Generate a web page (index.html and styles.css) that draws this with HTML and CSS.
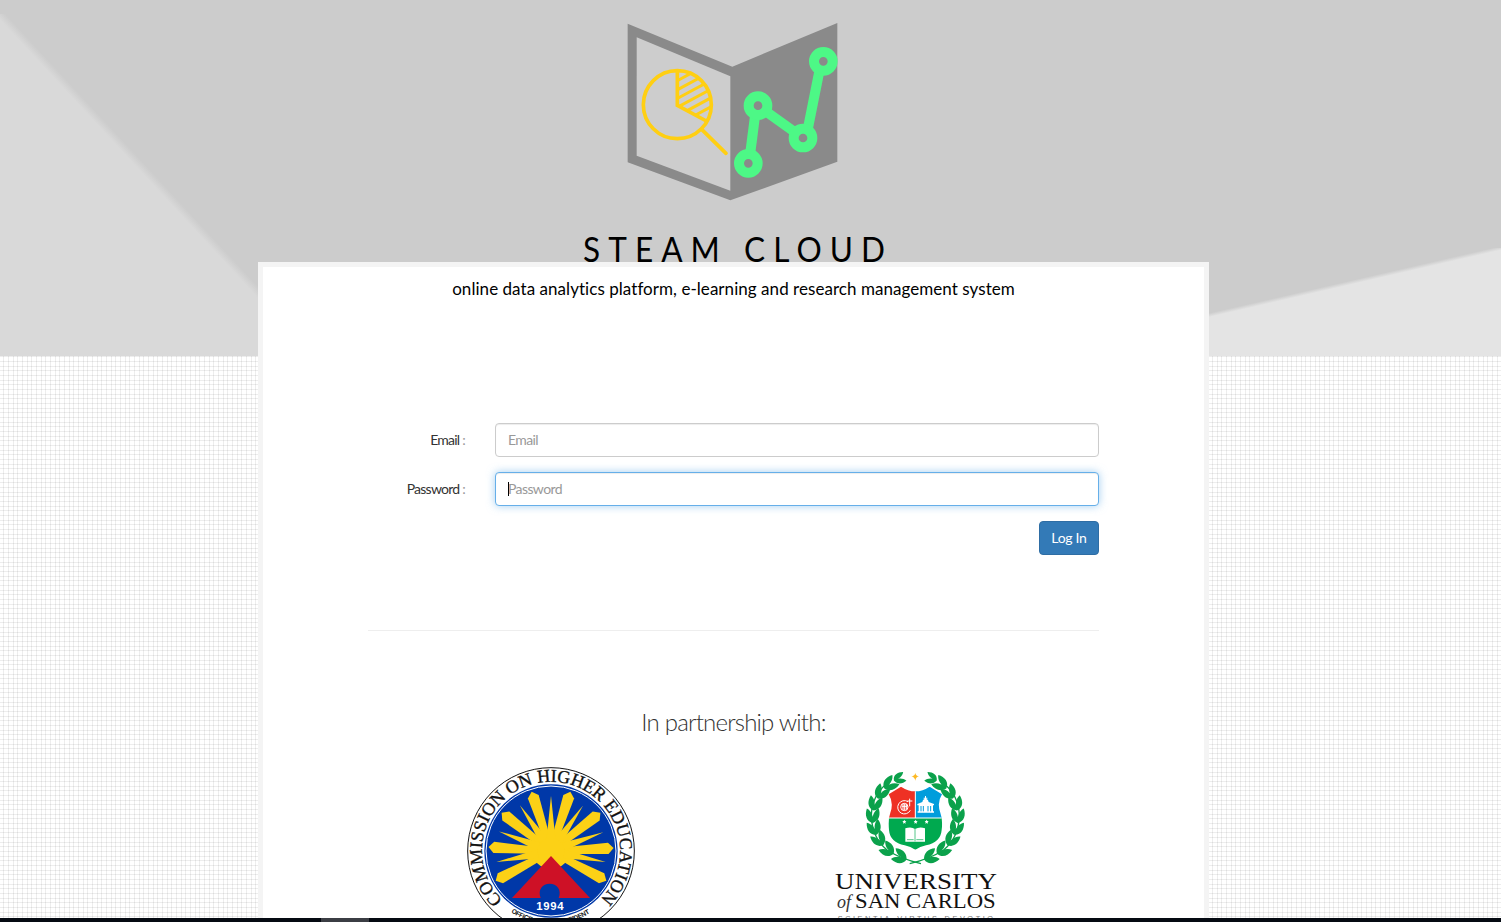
FILE: index.html
```html
<!DOCTYPE html>
<html lang="en">
<head>
<meta charset="utf-8">
<title>STEAM Cloud</title>
<link rel="stylesheet" href="styles.css">
</head>
<body>
<header class="hero">
  <svg class="logo" viewBox="0 0 720 600" aria-label="STEAM Cloud logo">
    <path d="M53 41 367 170 682 39V455L361 571 53 457Z" fill="#8a8a8a"/>
    <path d="M80 82 361 199V542L80 437Z" fill="#cdcdcd"/>
    <clipPath id="slice"><path d="M202 284V183A101 101 0 0 1 291 333Z"/></clipPath>
    <g fill="none" stroke="#ffcf12" stroke-width="11">
      <circle cx="202" cy="284" r="102"/>
      <path d="M202 183V286L289 333"/>
      <path d="M275 358 348 430" stroke-linecap="round"/>
      <path clip-path="url(#slice)" stroke-width="9" d="M195 216 265 178M195 243 290 192M195 269 305 210M200 293 315 231M222 307 320 254M246 321 320 281"/>
    </g>
    <g fill="none" stroke="#4df886" stroke-width="30">
      <path d="M417 459 439 287"/><path d="M444 287 579 384"/><path d="M588 384 634 154"/>
    </g>
    <g fill="#8a8a8a" stroke="#4df886" stroke-width="30">
      <circle cx="415" cy="460" r="28"/><circle cx="444" cy="287" r="28"/>
      <circle cx="579" cy="384" r="28"/><circle cx="640" cy="154" r="28"/>
    </g>
  </svg>
  <h1 class="title">STEAM CLOUD</h1>
</header>
<main class="card">
  <p class="tagline">online data analytics platform, e-learning and research management system</p>
  <form class="login">
    <label class="label" for="email">Email <span class="colon">:</span></label>
    <input class="field" id="email" type="text" placeholder="Email">
    <label class="label" for="password">Password <span class="colon">:</span></label>
    <div class="active"><input class="field focused" id="password" type="password" placeholder="Password"><i class="caret"></i></div>
    <button class="submit" type="button">Log In</button>
  </form>
  <hr class="rule">
  <h2 class="partners-title">In partnership with:</h2>
  <div class="partners">
    <svg class="seal" viewBox="36 37 504 504" aria-label="Commission on Higher Education">
      <defs>
        <path id="arc" d="M143 436A207 207 0 1 1 433 436"/>
        <path id="foot" d="M168 473A219 219 0 0 0 408 473"/>
        <path id="ray" d="M0-188 17-172 10-40H-10L-17-172Z"/>
        <path id="beam" d="M0-167 13-40H-13Z"/>
      </defs>
      <circle cx="288" cy="289" r="250" fill="#fff" stroke="#111" stroke-width="3"/>
      <circle cx="288" cy="289" r="200" fill="#0038a8"/>
      <circle cx="288" cy="289" r="195" fill="none" stroke="#fff" stroke-width="3"/>
      <g fill="#fcd116" transform="translate(288 290)">
        <circle cy="-4" r="57"/>
        <use href="#ray" transform="rotate(-18)"/><use href="#ray" transform="rotate(18)"/>
        <use href="#ray" transform="rotate(-52)"/><use href="#ray" transform="rotate(52)"/>
        <use href="#ray" transform="rotate(-86)"/><use href="#ray" transform="rotate(87)"/>
        <use href="#ray" transform="rotate(-118)"/><use href="#ray" transform="rotate(118)"/>
        <use href="#beam"/>
        <use href="#beam" transform="rotate(-34)"/><use href="#beam" transform="rotate(35)"/>
        <use href="#beam" transform="rotate(-69)"/><use href="#beam" transform="rotate(70)"/>
        <use href="#beam" transform="rotate(-101)"/><use href="#beam" transform="rotate(101)"/>
      </g>
      <path d="M288 304 405 430H171Z" fill="#ce1126"/>
      <path d="M257 430C247 404 263 387 284 387S321 404 311 430Z" fill="#0038a8"/>
      <text class="seal-year" x="244" y="465" textLength="82">1994</text>
      <text class="seal-name"><textPath href="#arc" textLength="975">COMMISSION ON HIGHER EDUCATION</textPath></text>
      <text class="seal-foot"><textPath href="#foot" textLength="250">OFFICE OF THE PRESIDENT</textPath></text>
    </svg>
    <svg class="usc" viewBox="42 36 492 450" aria-label="University of San Carlos">
      <defs>
        <path id="crest" d="M243 80Q264 94 286 94T329 80L366 103Q350 128 361 158 369 180 365 210 362 247 318 256 300 260 286 269 272 260 254 256 210 247 207 210 203 180 211 158 222 128 206 103Z"/>
        <clipPath id="crestclip"><use href="#crest"/></clipPath>
        <path id="tuft" d="M0 18C-20 13-24-7-16-26-2-18 3 0 0 18ZM0 18C-3-3 5-18 19-25 25-6 19 12 0 18Z"/>
        <g id="branch" fill="#0ba14b">
          <path d="M303 311Q243 297 201 270 155 232 154 165 156 108 199 72" fill="none" stroke="#0ba14b" stroke-width="4"/>
          <use href="#tuft" transform="translate(243 292) rotate(-68)"/>
          <use href="#tuft" transform="translate(206 271) rotate(-56)"/>
          <use href="#tuft" transform="translate(179 241) rotate(-37)"/>
          <use href="#tuft" transform="translate(164 207) rotate(-20)"/>
          <use href="#tuft" transform="translate(158 171) rotate(-3)"/>
          <use href="#tuft" transform="translate(164 134) rotate(10)"/>
          <use href="#tuft" transform="translate(182 100) rotate(29)"/>
          <use href="#tuft" transform="translate(207 74) rotate(51)"/>
          <use href="#tuft" transform="translate(235 56) rotate(68) scale(.8)"/>
        </g>
      </defs>
      <use href="#branch"/><use href="#branch" transform="translate(572 0) scale(-1 1)"/>
      <path d="M286 38Q287 48 297 49 287 51 286 62 284 51 274 49 285 48 286 38Z" fill="#fdb924"/>
      <g clip-path="url(#crestclip)">
        <path d="M200 70H286V174H200Z" fill="#ee3124"/>
        <path d="M286 70H372V174H286Z" fill="#009ddc"/>
        <path d="M200 174H372V275H200Z" fill="#00a94f"/>
        <path d="M286 70V174M200 174H372" stroke="#fff" stroke-width="3"/>
      </g>
      <g fill="none" stroke="#fff" stroke-width="3">
        <circle cx="253" cy="141" r="11"/>
        <path d="M264 125A20 20 0 1 0 271 151M245 139H262M249 131V150M254 131V151M259 132V149M269 116V139M262 123H277"/>
      </g>
      <g fill="#fff">
        <path d="M315 108H318V113H322V116H318Q326 119 326 126L342 132V136H339V154H342V158H293V154H296V136H292V132L307 126Q307 119 315 116H311V113H315Z"/>
        <path d="M303 138V154M310 138V154M324 138V154M332 138V154" stroke="#009ddc" stroke-width="3"/>
        <path d="M256 205Q274 199 285 207 299 199 315 205V245H256Z"/>
        <path d="M285 207V244M261 239H281M289 239H310" stroke="#00a94f" stroke-width="2"/>
        <path id="star" d="M253 179 255 183 259 184 256 187 257 191 253 189 249 191 250 187 247 184 251 183Z"/>
        <use href="#star" x="34"/><use href="#star" x="67"/>
      </g>
      <text class="usc-name" x="45" y="387" textLength="486" lengthAdjust="spacingAndGlyphs">UNIVERSITY</text>
      <text class="usc-of" x="51" y="444" textLength="42" lengthAdjust="spacingAndGlyphs">of</text>
      <text class="usc-city" x="105" y="444" textLength="422" lengthAdjust="spacingAndGlyphs">SAN CARLOS</text>
      <text class="usc-motto" x="53" y="482" textLength="466">SCIENTIA•VIRTUS•DEVOTIO</text>
    </svg>
  </div>
</main>
<div class="taskbar"><span class="task"></span></div>
</body>
</html>
```
FILE: styles.css
```css
* { box-sizing: border-box; }
body {
  margin: 0;
  height: 922px;
  overflow: hidden;
  font-family: Lato, "Open Sans", sans-serif;
  font-size: 14px;
  color: #333;
  background-color: #fff;
  background-image:
    linear-gradient(90deg, #0000 3px, #00000012 3px 4px, #0000 4px 8px, #00000012 8px 9px, #0000 9px 13px, #00000012 13px),
    linear-gradient(#00000012 1px, #0000 1px 5px, #00000012 5px 6px, #0000 6px 10px, #00000012 10px 11px, #0000 11px);
  background-size: 14px 14px;
  background-position: 0 356px;
}
.hero {
  position: relative;
  height: 356px;
  padding-top: 10px;
  overflow: hidden;
  background: #ccc;
}
/* The two lighter facets of the banner */
.hero::before, .hero::after {
  content: "";
  position: absolute;
}
.hero::before {
  left: 0;
  top: 14px;
  width: 330px;
  height: 356px;
  background: linear-gradient(to top right, #d9d9d9 calc(50% - 4px), #ccc calc(50% + 4px));
}
.hero::after {
  left: 1001px;
  right: 0;
  top: 248px;
  height: 115px;
  background: linear-gradient(to bottom right, #ccc calc(50% - 2px), #e4e4e4 calc(50% + 2px));
}
.logo { position: relative; z-index: 1; display: block; width: 240px; height: 200px; margin-left: 610px; }
.title {
  position: relative;
  z-index: 1;
  width: 350px;
  margin: 16px 0 0 583px;
  font-size: 35px;
  line-height: 44px;
  font-weight: 400;
  letter-spacing: 9px;
  white-space: nowrap;
  color: #000;
  transform: scaleX(.9);
  transform-origin: 0 50%;
}
.card {
  position: relative;
  z-index: 2;
  width: 951px;
  height: 660px;
  margin: -94px 0 0 258px;
  padding: 11px 105px 0;
  border: 5px solid #f4f4f4;
  border-bottom: 0;
  background: #fff;
}
.tagline {
  margin: 0;
  font-size: 17px;
  line-height: 22px;
  letter-spacing: .05px;
  font-variant-ligatures: none;
  text-align: center;
  white-space: nowrap;
  color: #000;
}
.login { display: grid; grid-template-columns: 97px 604px; column-gap: 30px; row-gap: 15px; margin-top: 123px; }
.label { text-align: right; line-height: 33px; letter-spacing: -.75px; }
.colon { color: #999; }
.field {
  display: block;
  width: 604px;
  height: 34px;
  padding: 5px 12px 7px;
  border: 1px solid #ccc;
  border-radius: 4px;
  outline: 0;
  font: 14px Lato, sans-serif;
  letter-spacing: -.6px;
  box-shadow: inset 0 1px 1px #00000013;
}
.field::placeholder { color: #999; }
.focused { border-color: #66afe9; box-shadow: inset 0 1px 1px #00000013, 0 0 8px #66afe999; }
.active { position: relative; }
.caret { position: absolute; left: 13px; top: 10px; width: 1px; height: 14px; background: #000; }
.submit {
  grid-column: 2;
  justify-self: end;
  width: 60px;
  height: 34px;
  padding: 0 0 2px;
  border: 1px solid #2e6da4;
  border-radius: 4px;
  font: 14px Lato, sans-serif;
  letter-spacing: -.3px;
  color: #fff;
  background: #337ab7;
}
.rule { height: 1px; margin: 75px 0 0; border: 0; background: #eee; }
.partners-title { margin: 75px 0 0; font-size: 24px; line-height: 32px; font-weight: 300; letter-spacing: -.8px; text-align: center; }
.partners { display: flex; gap: 199px; margin: 29px 0 0 99px; }
.seal { width: 168px; height: 168px; }
.seal-year { font: bold 34px "Liberation Sans", sans-serif; fill: #fff; }
.seal-name { font: 54px "Liberation Serif", serif; fill: #111; stroke: #111; stroke-width: 1px; }
.seal-foot { font: bold 20px "Liberation Sans", sans-serif; fill: #111; }
.usc { width: 164px; height: 150px; margin-top: 5px; }
.usc-name { font: 70px "Liberation Serif", serif; fill: #111; }
.usc-of { font: italic 56px "Liberation Serif", serif; fill: #333; }
.usc-city { font: 60px "Liberation Serif", serif; fill: #111; }
.usc-motto { font: 22px "Liberation Sans", sans-serif; fill: #777; }
.taskbar { position: fixed; z-index: 5; left: 0; right: 0; bottom: 0; height: 4px; padding-left: 321px; background: #050a12; }
.task { display: block; width: 48px; height: 4px; background: #3b3d44; }
```
